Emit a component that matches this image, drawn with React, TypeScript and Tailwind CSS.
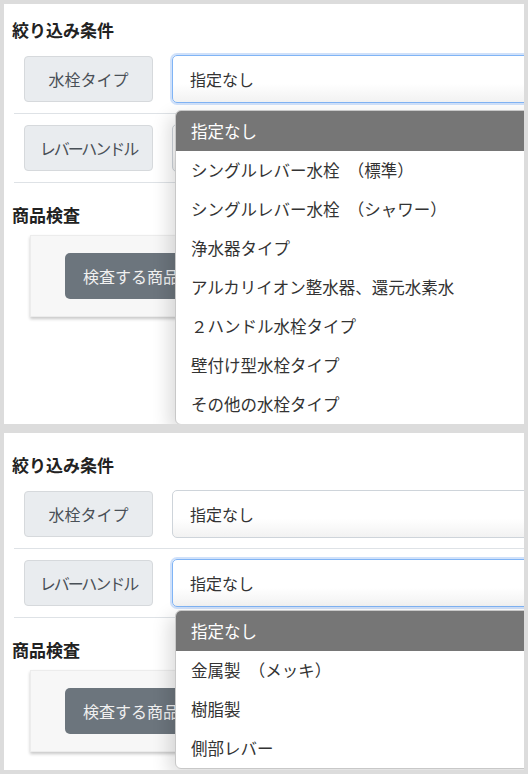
import React from "react";

const font = { fontFamily: '"Noto Sans CJK JP", "Noto Sans", sans-serif' };

const waterTypes = [
  "指定なし",
  "シングルレバー水栓　（標準）",
  "シングルレバー水栓　（シャワー）",
  "浄水器タイプ",
  "アルカリイオン整水器、還元水素水",
  "２ハンドル水栓タイプ",
  "壁付け型水栓タイプ",
  "その他の水栓タイプ",
];

const leverTypes = ["指定なし", "金属製　（メッキ）", "樹脂製", "側部レバー"];

function SelectBox({ focused }: { focused: boolean }) {
  return (
    <div
      className={`h-12 flex-1 -mr-8 flex items-center pl-[17px] rounded-[5px] border text-[16px] text-[#333] bg-gradient-to-b from-white from-60% to-[#f2f2f2] ${
        focused
          ? "border-[#80b4f5] shadow-[0_0_0_2px_rgba(120,170,240,0.35)]"
          : "border-[#ced4da] bg-white"
      }`}
    >
      指定なし
    </div>
  );
}

function FilterRow({ label, focused, narrow }: { label: string; focused: boolean; narrow?: boolean }) {
  return (
    <div className="flex items-center gap-[19px] pl-5 h-12">
      <div
        className={`w-[129px] h-[46px] shrink-0 flex items-center justify-center rounded-[4px] border border-[#d6d9dc] bg-[#e9ecef] text-[16px] text-[#495057] ${
          narrow ? "tracking-[-2px]" : ""
        }`}
      >
        {label}
      </div>
      <SelectBox focused={focused} />
    </div>
  );
}

function Dropdown({ items, top }: { items: string[]; top: number }) {
  return (
    <div
      className="absolute left-[171px] w-[380px] bg-white border border-[#c8c8c8] rounded-[6px] overflow-hidden shadow-[-6px_6px_18px_rgba(0,0,0,0.14)]"
      style={{ top }}
    >
      {items.map((item, i) => (
        <div
          key={item}
          className={`flex items-center pl-[15px] text-[16.5px] whitespace-pre ${
            i === 0 ? "h-[40px] bg-[#767676] text-white" : "h-[39px] text-[#333]"
          }`}
        >
          {item}
        </div>
      ))}
    </div>
  );
}

function Panel({
  height,
  pt,
  open,
}: {
  height: number;
  pt: number;
  open: "water" | "lever";
}) {
  return (
    <div className="relative bg-white overflow-hidden" style={{ height }}>
      <div style={{ paddingTop: pt }}>
        <h2 className="pl-2 text-[17px] leading-6 font-bold text-[#222]">絞り込み条件</h2>
        <div className="mt-[13px]">
          <FilterRow label="水栓タイプ" focused={open === "water"} />
          <div className="ml-[10px] mt-[10px] border-t border-[#dee2e6]" />
          <div className="mt-[10px]">
            <FilterRow label="レバーハンドル" focused={open === "lever"} narrow />
          </div>
          <div className="ml-[10px] mt-[10px] border-t border-[#dee2e6]" />
        </div>
        <h2 className="pl-2 mt-5 text-[17px] leading-6 font-bold text-[#222]">商品検査</h2>
        <div className="ml-[26px] mt-2 w-[320px] h-[82px] flex items-center pl-[34px] bg-[#f7f7f7] border border-[#ececec] shadow-[0_2px_3px_rgba(0,0,0,0.22)]">
          <button className="h-[46px] px-[18px] rounded-[5px] bg-[#6c757d] text-[16px] text-[#f0f0f0] whitespace-nowrap">
            検査する商品
          </button>
        </div>
      </div>
      {open === "water" ? (
        <Dropdown items={waterTypes} top={106} />
      ) : (
        <Dropdown items={leverTypes} top={177} />
      )}
    </div>
  );
}

export default function App() {
  return (
    <div className="w-[528px] h-[774px] bg-[#dcdcdc] px-1 pt-1 flex flex-col gap-[9px]" style={font}>
      <Panel height={420} pt={14} open="water" />
      <Panel height={337} pt={20} open="lever" />
    </div>
  );
}
